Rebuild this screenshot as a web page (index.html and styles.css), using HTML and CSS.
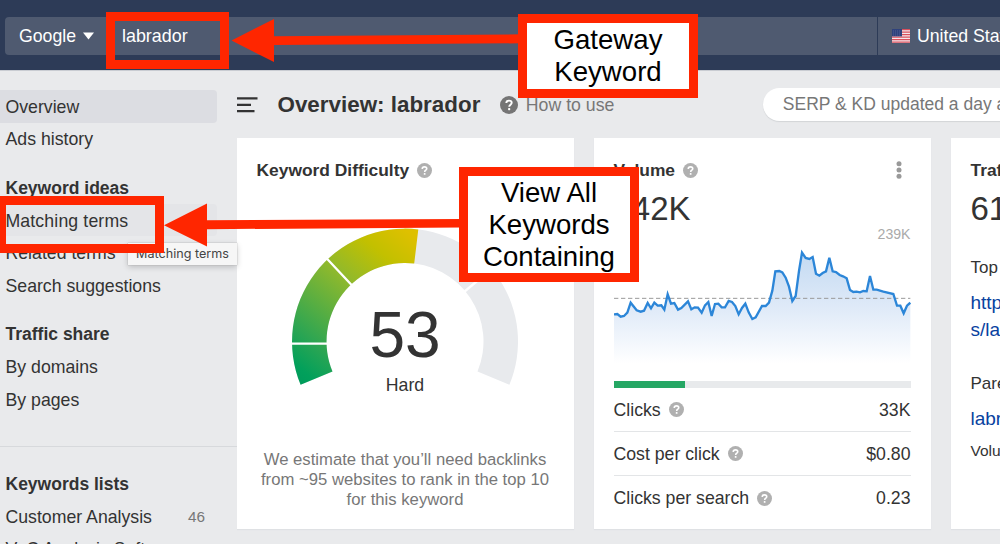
FILE: index.html
```html
<!DOCTYPE html>
<html lang="en">
<head>
<meta charset="utf-8">
<title>Overview: labrador</title>
<link rel="stylesheet" href="styles.css">
</head>
<body>
<svg class="defs" width="0" height="0">
  <symbol id="help" viewBox="0 0 16 16">
    <circle cx="8" cy="8" r="8"/>
    <path d="M5.6 6.3C5.6 4.9 6.6 4.1 8 4.1s2.4.8 2.4 2c0 1.6-2.2 1.6-2.2 3.4" fill="none" stroke="#fff" stroke-width="1.7"/>
    <rect x="7.2" y="10.7" width="1.9" height="1.9" rx=".6" fill="#fff"/>
  </symbol>
</svg>

<header class="topbar">
  <div class="engine">Google <svg width="11" height="8" viewBox="0 0 11 8"><path d="M0 .5h11L5.5 7.5z" fill="#fff"/></svg></div>
  <div class="query">labrador</div>
  <div class="country">
    <svg class="flag" width="18" height="14" viewBox="0 0 18 14"><rect width="18" height="14" fill="#f4e6ea"/><path d="M0 .7h18M0 3.2h18M0 5.7h18M0 8.2h18M0 10.7h18M0 13.2h18" stroke="#d9505c" stroke-width="1.2"/><rect width="10" height="7.4" fill="#2f427c"/><path d="M1 2h8M1 4h8M1 6h8" stroke="#6777a4" stroke-width=".6" stroke-dasharray="1 1"/></svg>
    <span>United States</span>
  </div>
</header>

<div class="page">
  <nav class="sidebar">
    <a class="item current">Overview</a>
    <a class="item">Ads history</a>
    <h3 class="group">Keyword ideas</h3>
    <a class="item hover">Matching terms</a>
    <a class="item">Related terms</a>
    <a class="item">Search suggestions</a>
    <h3 class="group">Traffic share</h3>
    <a class="item">By domains</a>
    <a class="item">By pages</a>
    <hr class="rule">
    <h3 class="group lists">Keywords lists</h3>
    <a class="item">Customer Analysis <span class="count">46</span></a>
    <a class="item">VoC Analysis Software <span class="count">34</span></a>
  </nav>

  <main class="main">
    <div class="titlebar">
      <svg class="burger" width="21" height="16" viewBox="0 0 21 16"><path d="M0 1.4h20.5M0 7.8h14M0 14.2h17.5" stroke="#333" stroke-width="2.3"/></svg>
      <h1 class="title">Overview: labrador</h1>
      <svg class="help dark" width="18" height="18"><use href="#help"/></svg>
      <span class="howto">How to use</span>
      <div class="pill">SERP &amp; KD updated a day ago</div>
    </div>

    <div class="cards">
      <section class="card difficulty">
        <h2 class="cardtitle">Keyword Difficulty <svg class="help" width="15" height="15"><use href="#help"/></svg></h2>
        <div class="gauge">
          <svg width="228" height="158" viewBox="291 228 228 158">
            <defs><linearGradient id="heat" gradientUnits="userSpaceOnUse" x1="300" y1="385" x2="418" y2="240">
              <stop offset="0" stop-color="#009b5b"/><stop offset=".07" stop-color="#02a05b"/><stop offset=".22" stop-color="#2ba553"/><stop offset=".6" stop-color="#90b92c"/><stop offset=".82" stop-color="#c2c000"/><stop offset="1" stop-color="#dec000"/>
            </linearGradient></defs>
            <path d="M300.6 384.8A113 113 0 1 1 509.4 384.8L477.5 371.6A78.5 78.5 0 1 0 332.5 371.6Z" fill="#e8eaed"/>
            <path d="M300.6 384.8A113 113 0 0 1 418.3 229.4L414.2 263.6A78.5 78.5 0 0 0 332.5 371.6Z" fill="url(#heat)"/>
            <path d="M291 343.7H328M327 258.700L352.300 285.700M464 292L494 267" stroke="#fff" stroke-width="2.300"/>
          </svg>
          <div class="score">53</div>
          <div class="level">Hard</div>
        </div>
        <p class="estimate">We estimate that you’ll need backlinks<br>from ~95 websites to rank in the top 10<br>for this keyword</p>
      </section>

      <section class="card volume">
        <h2 class="cardtitle">Volume <svg class="help" width="15" height="15"><use href="#help"/></svg>
          <svg class="dots" width="6" height="18" viewBox="0 0 6 18"><g fill="#999"><circle cx="3" cy="2.700" r="2.500"/><circle cx="3" cy="9" r="2.500"/><circle cx="3" cy="15.300" r="2.500"/></g></svg></h2>
        <div class="big">142K</div>
        <div class="peak">239K</div>
        <svg class="chart" width="297" height="138" viewBox="42 36 891 414">
          <defs><linearGradient id="fade" x1="0" y1="0" x2="0" y2="1"><stop offset="0" stop-color="#c3daf2"/><stop offset=".5" stop-color="#dfeaf8"/><stop offset="1" stop-color="#fff"/></linearGradient></defs>
          <path fill="url(#fade)" d="M42 253 52 252 62 260 72 258 82 248 92 218 110 241 122 245 132 242 143 219 153 235 163 218 173 227 184 226 193 239 203 193 213 221 223 219 234 239 244 234 264 214 274 238 284 232 294 233 305 248 315 226 325 216 335 258 345 222 355 221 365 232 375 232 386 213 396 216 406 228 416 253 426 234 436 221 446 247 457 267 467 262 486 228 497 228 507 218 517 182 526 124 538 123 547 127 557 143 567 170 577 213 587 198 597 123 606 68 617 84 628 87 638 81 648 131 658 137 668 129 678 124 688 83 698 124 708 126 719 135 729 139 740 145 750 180 760 186 770 185 780 187 790 183 800 184 810 138 820 179 830 179 850 185 880 192 891 227 901 227 911 250 921 227 931 218V400H42Z"/>
          <path d="M42 205H931" stroke="#999" stroke-width="3" stroke-dasharray="13 8"/>
          <path fill="none" stroke="#2c86d8" stroke-width="7" d="M42 253 52 252 62 260 72 258 82 248 92 218 110 241 122 245 132 242 143 219 153 235 163 218 173 227 184 226 193 239 203 193 213 221 223 219 234 239 244 234 264 214 274 238 284 232 294 233 305 248 315 226 325 216 335 258 345 222 355 221 365 232 375 232 386 213 396 216 406 228 416 253 426 234 436 221 446 247 457 267 467 262 486 228 497 228 507 218 517 182 526 124 538 123 547 127 557 143 567 170 577 213 587 198 597 123 606 68 617 84 628 87 638 81 648 131 658 137 668 129 678 124 688 83 698 124 708 126 719 135 729 139 740 145 750 180 760 186 770 185 780 187 790 183 800 184 810 138 820 179 830 179 850 185 880 192 891 227 901 227 911 250 921 227 931 218"/>
        </svg>
        <div class="meter"><div class="fill"></div></div>
        <div class="stat"><span>Clicks</span><svg class="help" width="15" height="15"><use href="#help"/></svg><b class="value">33K</b></div>
        <div class="stat"><span>Cost per click</span><svg class="help" width="15" height="15"><use href="#help"/></svg><b class="value">$0.80</b></div>
        <div class="stat"><span>Clicks per search</span><svg class="help" width="15" height="15"><use href="#help"/></svg><b class="value">0.23</b></div>
      </section>

      <section class="card traffic">
        <h2 class="cardtitle">Traffic Potential</h2>
        <div class="big">61K</div>
        <div class="label top">Top result</div>
        <a class="link">https://www<br>s/labrador</a>
        <div class="label parent">Parent Topic</div>
        <a class="link">labrador</a>
        <div class="label small">Volume</div>
      </section>
    </div>
  </main>
</div>

<div class="tooltip">Matching terms</div>
<div class="frame frame-query"></div>
<div class="frame frame-terms"></div>
<svg class="arrows" width="1000" height="544" viewBox="0 0 1000 544">
  <path fill="#ff2600" d="M231.500 40.500 274 19V36.200L520 34.300V43.300L274 45V62Z"/>
  <path fill="#ff2600" d="M164 225.200 207 203.500V220.200L461 219V227.500L207 229.200V246.500Z"/>
</svg>
<div class="callout gateway">Gateway<br>Keyword</div>
<div class="callout containing">View All<br>Keywords<br>Containing</div>
</body>
</html>
```
FILE: styles.css
```css
* { box-sizing: border-box; }
body {
  margin: 0;
  width: 1000px;
  height: 544px;
  overflow: hidden;
  position: relative;
  background: #e9eaec;
  color: #333;
  font: 17.7px/20px "Liberation Sans", Arial, sans-serif;
}
h1, h2, h3, p { margin: 0; }
.defs { position: absolute; }

.topbar {
  display: flex;
  height: 70px;
  padding: 17px 0 15px 5px;
  background: #2d3b57;
  color: #fff;
  overflow: hidden;
  white-space: nowrap;
}
.engine, .query, .country { display: flex; flex: none; align-items: center; background: #4f5a70; }
.engine { width: 102px; padding-left: 14px; gap: 7px; border-radius: 4px 0 0 4px; }
.query { width: 770px; padding-left: 15px; font-size: 17.9px; }
.country { width: 140px; margin-left: 1px; padding-left: 14px; gap: 7px; }
.flag { flex: none; }

.page { display: flex; height: 474px; overflow: hidden; border-top: 1px solid #c9ccd2; }
.sidebar { width: 236.5px; flex: none; padding-top: 19px; }
.item, .group {
  display: flex;
  align-items: center;
  height: 32.6px;
  width: 217px;
  padding: 1px 0 0 5.5px;
  white-space: nowrap;
  border-radius: 0 4px 4px 0;
}
.current { background: #dcdde2; }
.hover { background: #e4e5e8; letter-spacing: .13px; }
.group { margin-top: 16px; font-size: 17.5px; }
.rule { margin: 30.500px 0 0; border: 0; border-top: 1px solid #d7d9dc; }
.lists { margin-top: 20.500px; }
.count { margin-left: auto; margin-right: 12px; font-size: 15.300px; color: #777; }

.main { flex: none; width: 763.5px; overflow: hidden; }
.titlebar { display: flex; align-items: center; height: 67px; white-space: nowrap; }
.burger { flex: none; margin-right: 20px; }
.title { font-size: 22.400px; }
.help { fill: #b0b0b0; flex: none; }
.help.dark { fill: #757575; margin: 0 8px 0 19.500px; }
.howto { flex: none; width: 237px; color: #777; }
.pill {
  flex: none;
  width: 270px;
  height: 33px;
  padding-left: 20px;
  border-radius: 17px;
  background: #fff;
  box-shadow: 0 1px 1px #d3d5d8;
  color: #777;
  font-size: 17.500px;
  line-height: 33px;
}

.cards { display: flex; gap: 20px; }
.card { width: 337px; height: 391px; flex: none; padding: 22px 20px 0; background: #fff; box-shadow: 0 1px 1px #dfe1e4; }
.cardtitle { display: flex; align-items: center; height: 20px; gap: 8px; font-size: 17.400px; white-space: nowrap; }
.dots { margin-left: auto; margin-right: 9px; }

.gauge { display: flex; flex-direction: column; align-items: center; margin-top: 48px; }
.score { margin-top: -83px; font-size: 64px; line-height: 64px; }
.level { margin-top: 8px; }
.estimate { margin: 55px -10px 0; text-align: center; color: #777; font-size: 16.700px; }

.big { margin-top: 11px; font-size: 33px; line-height: 36px; }
.peak { margin-top: -1px; text-align: right; font-size: 14.100px; line-height: 16px; color: #aaa; }
.chart { display: block; }
.meter { height: 7.500px; margin-top: .5px; background: #e8eaec; }
.fill { width: 71px; height: 100%; background: #25a764; }
.stat { display: flex; align-items: center; gap: 8px; height: 44px; border-bottom: 1px solid #e3e5e7; }
.stat:last-child { border: 0; }
.value { margin-left: auto; font-weight: 400; }

.traffic { white-space: nowrap; }
.label { font-size: 17px; }
.top { margin-top: 31px; }
.link { display: block; margin-top: 11px; color: #0842a0; font-size: 19px; line-height: 27px; }
.parent { margin-top: 31px; }
.small { margin-top: 9px; font-size: 15.500px; }

.tooltip {
  position: absolute;
  left: 128px;
  top: 243px;
  width: 109px;
  height: 22px;
  background: #f6f6f6;
  box-shadow: 0 0 1px #999, 0 2px 6px #0003;
  font: 12.600px/22px Inter, sans-serif;
  text-align: center;
  color: #444;
}
.frame { position: absolute; border: 9px solid #ff2600; }
.frame-query { left: 106px; top: 12px; width: 123px; height: 57px; }
.frame-terms { left: -3px; top: 196px; width: 167px; height: 57px; }
.arrows { position: absolute; left: 0; top: 0; }
.callout {
  position: absolute;
  width: 180px;
  border: 9px solid #ff2600;
  background: #fff;
  color: #000;
  text-align: center;
  font-size: 27.600px;
  line-height: 32px;
}
.gateway { left: 518px; top: 14px; height: 84px; padding-top: 1px; }
.containing { left: 459px; top: 167px; height: 115px; padding-top: 1px; }
```
